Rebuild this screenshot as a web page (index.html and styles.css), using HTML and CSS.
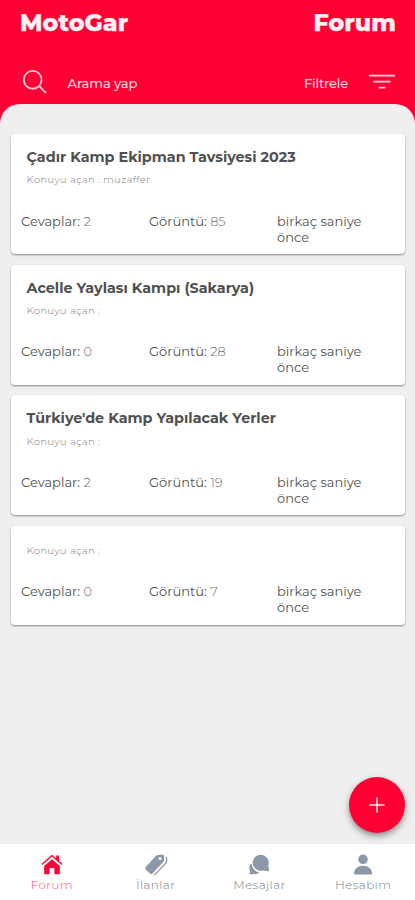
FILE: index.html
```html
<!DOCTYPE html>
<html lang="tr">
<head>
<meta charset="utf-8">
<title>MotoGar Forum</title>
<link rel="stylesheet" href="styles.css">
</head>
<body>
<div class="app">
  <header class="header">
    <div class="titles"><h1 class="brand">MotoGar</h1><h2 class="page-name">Forum</h2></div>
    <div class="tools">
      <svg class="search-icon" viewBox="0 0 24 24"><circle cx="9.7" cy="9.8" r="8.9"/><path d="M16.2 16.2 23 23"/></svg>
      <span class="search-label">Arama yap</span>
      <span class="filter-label">Filtrele</span>
      <svg class="filter-icon" viewBox="0 0 26 16"><path d="M0 1.7h26M4.5 7.7h17M9.7 13.7h6.6"/></svg>
    </div>
  </header>
  <main class="content">
    <article class="card">
      <h3 class="title">Çadır Kamp Ekipman Tavsiyesi 2023</h3>
      <p class="author">Konuyu açan : muzaffer</p>
      <div class="stats"><span>Cevaplar: <i>2</i></span><span>Görüntü: <i>85</i></span><span>birkaç saniye önce</span></div>
    </article>
    <article class="card">
      <h3 class="title">Acelle Yaylası Kampı (Sakarya)</h3>
      <p class="author">Konuyu açan :</p>
      <div class="stats"><span>Cevaplar: <i>0</i></span><span>Görüntü: <i>28</i></span><span>birkaç saniye önce</span></div>
    </article>
    <article class="card">
      <h3 class="title">Türkiye'de Kamp Yapılacak Yerler</h3>
      <p class="author">Konuyu açan :</p>
      <div class="stats"><span>Cevaplar: <i>2</i></span><span>Görüntü: <i>19</i></span><span>birkaç saniye önce</span></div>
    </article>
    <article class="card untitled">
      <p class="author">Konuyu açan :</p>
      <div class="stats"><span>Cevaplar: <i>0</i></span><span>Görüntü: <i>7</i></span><span>birkaç saniye önce</span></div>
    </article>
  </main>
  <nav class="nav">
    <a class="tab active">
      <svg viewBox="0 0 22 22"><path d="M11 5.2 3.2 12V20.3h5.4v-6.2h4.8v6.2h5.4V12z"/><path d="M15.2 1.6h2.9v5.2l3.4 3.1-.9 1L11 2.6 1.4 10.9l-.9-1L10.2 1.3q.8-.7 1.6 0l3.4 3z"/></svg>
      <span>Forum</span>
    </a>
    <a class="tab ads">
      <svg viewBox="0 0 24 22"><path fill-rule="evenodd" d="M12.6 1.3 18 .6Q20 .5 20.1 2.5L20 7.3 8.4 19.5Q7.2 20.6 6 19.5L1.7 15.4Q.5 14.2 1.7 13zM16.2 2.9a1.6 1.6 0 1 0 0 3.2 1.6 1.6 0 0 0 0-3.2z"/><path class="tag-edge" d="M21.6 2.8q1.2.7 1.1 2.1l-.4 3.8L11.4 20.1q-.7.7-1.5.6"/></svg>
      <span>İlanlar</span>
    </a>
    <a class="tab messages">
      <svg viewBox="0 0 22 22"><path d="M12.8.8a8 8 0 1 1-3.1 15.4A8 8 0 0 1 12.8.8zM17 14.5l3.6-2.5.5 5.2-6.2-.7z"/><path d="M3.6 9a9.4 9.4 0 0 0 8 9.6Q8.9 20.7 5.7 19.9L1.6 20.4 2.1 17Q-.2 12.5 3.6 9z"/></svg>
      <span>Mesajlar</span>
    </a>
    <a class="tab account">
      <svg viewBox="0 0 22 22"><circle cx="11" cy="5.3" r="4.8"/><path d="M2 19.8c0-4.8 3.8-8 9-8s9 3.2 9 8q0 .7-.8.7H2.8q-.8 0-.8-.7z"/></svg>
      <span>Hesabım</span>
    </a>
  </nav>
  <button class="fab" aria-label="Yeni konu"><svg viewBox="0 0 16 16"><path d="M8 .5v15M.5 8h15"/></svg></button>
</div>
</body>
</html>
```
FILE: styles.css
```css
* { box-sizing: border-box; }
body { margin: 0; font-family: Montserrat, Inter, sans-serif; background: #ff0035; }
h1, h2, h3, p { margin: 0; }
svg { display: block; flex: none; }
.app { position: relative; width: 415px; height: 900px; display: flex; flex-direction: column; overflow: hidden; }
.header { height: 104px; flex: none; color: #fff0f2; padding: 8px 19px 0 19px; }
.titles { display: flex; justify-content: space-between; height: 30px; }
.brand, .page-name { font-size: 23.6px; font-weight: 800; line-height: 30px; letter-spacing: .1px; -webkit-text-stroke: .25px currentColor; }
.brand { padding-left: 1px; }
.tools { display: flex; align-items: center; height: 30px; margin-top: 29px; font-size: 13px; font-weight: 500; line-height: 16px; color: #ffd5dc; }
.search-icon { width: 24px; height: 24px; margin: 0 0 0 3.5px; fill: none; stroke: #ffd5dc; stroke-width: 1.7; }
.search-label { margin: 2px 0 0 21px; letter-spacing: -.1px; white-space: nowrap; }
.filter-label { margin: 2px 0 0 auto; letter-spacing: -.2px; }
.filter-icon { width: 26px; height: 16px; margin: 0 1px 0 21px; fill: none; stroke: #ffd5dc; stroke-width: 1.8; }
.content { flex: 1; background: #efefef; border-radius: 20px 20px 0 0; padding: 30px 10px 0 11px; display: flex; flex-direction: column; gap: 10.6px; }
.card { height: 120px; flex: none; background: #fff; border-radius: 4px; box-shadow: 0 1px 2px rgba(0,0,0,.42); padding: 14px 10px 0; }
.title { height: 18px; line-height: 18px; font-size: 14.35px; font-weight: 700; color: #505050; padding-left: 5.5px; white-space: nowrap; }
.author { height: 14px; line-height: 14px; margin-top: 7.4px; padding-left: 5.5px; font-size: 10.2px; font-weight: 300; letter-spacing: .23px; color: #808080; }
.stats { display: grid; grid-template-columns: 128px 128px 100px; margin-top: 25.2px; font-size: 13px; line-height: 16px; font-weight: 400; color: #505050; }
.stats i { font-style: normal; font-weight: 300; color: #707070; }
.card.untitled { height: 99px; padding-top: 10.8px; }
.nav { height: 56px; flex: none; background: #fff; display: grid; grid-template-columns: repeat(4, 1fr); }
.tab { display: flex; flex-direction: column; align-items: center; padding-top: 10px; color: #777b82; font-size: 12px; font-weight: 300; line-height: 14px; letter-spacing: .38px; }
.tab svg { height: 22px; width: 22px; fill: #8a98a8; margin-bottom: 2px; }
.tab.ads svg { width: 24px; }
.tab.active { color: #ff3b5f; }
.tab.active svg { fill: #ff0035; }
.tab .tag-edge { fill: none; stroke: #8a98a8; stroke-width: 1.3; }
.fab { position: absolute; left: 349px; top: 777px; width: 56px; height: 56px; padding: 0; border: 0; border-radius: 50%; background: #ff0035; display: grid; place-items: center; box-shadow: 0 3px 5px rgba(0,0,0,.28), 0 4px 10px rgba(0,0,0,.16); }
.fab svg { width: 16px; height: 16px; fill: none; stroke: #ffe9ed; stroke-width: 1.5; }
```
